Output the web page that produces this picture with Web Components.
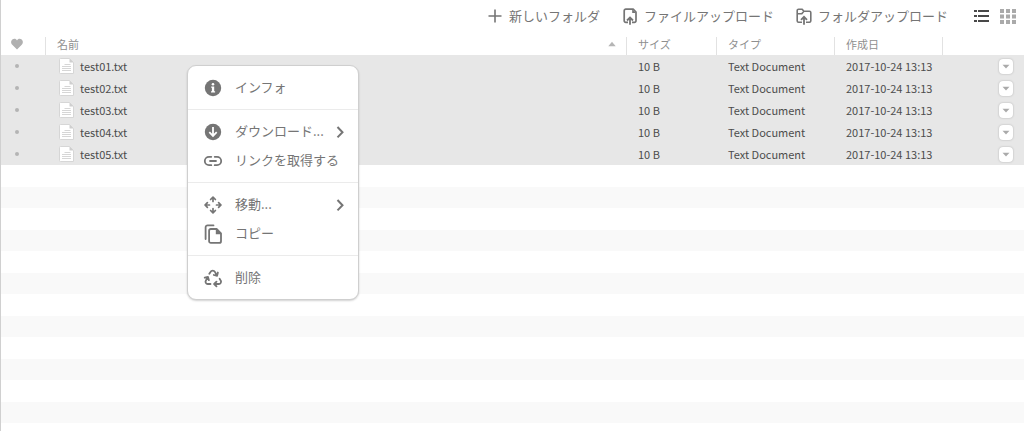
<!DOCTYPE html>
<html lang="ja">
<head>
<meta charset="utf-8">
<meta name="viewport" content="width=device-width, initial-scale=1">
<title>ファイル</title>
<style>
  body {
    margin: 0;
    background: #fff;
    color: #757575;
    font: 13px/22px "Noto Sans CJK JP", "Noto Sans", sans-serif;
  }
</style>
</head>
<body>
<file-browser>
  <tool-bar slot="toolbar">
    <tool-action icon="plus">新しいフォルダ</tool-action>
    <tool-action icon="file-up">ファイルアップロード</tool-action>
    <tool-action icon="folder-up">フォルダアップロード</tool-action>
    <view-switch slot="end"></view-switch>
  </tool-bar>
  <file-table></file-table>
  <context-menu slot="menu">
    <menu-group>
      <menu-item icon="info">インフォ</menu-item>
    </menu-group>
    <menu-group>
      <menu-item icon="download" submenu>ダウンロード...</menu-item>
      <menu-item icon="link">リンクを取得する</menu-item>
    </menu-group>
    <menu-group>
      <menu-item icon="move" submenu>移動...</menu-item>
      <menu-item icon="copy">コピー</menu-item>
    </menu-group>
    <menu-group>
      <menu-item icon="recycle">削除</menu-item>
    </menu-group>
  </context-menu>
</file-browser>

<script>
const line = 'fill="none" stroke="currentColor"';
const icons = {
  'plus': `<path ${line} stroke-width="1.6" d="M10 3.5v13M3.5 10h13"/>`,
  'file-up': `<path ${line} stroke-width="1.7" stroke-linejoin="round" d="M8 16.3H5.8a1.6 1.6 0 0 1-1.6-1.6V4.8a1.6 1.6 0 0 1 1.6-1.6h7.4L16 6v8.7a1.6 1.6 0 0 1-1.6 1.6H12"/><path fill="currentColor" d="M12.200 3v4H16z"/><path ${line} stroke-width="1.8" d="M10 18.8v-6.500M7 14.500l3-3 3 3"/>`,
  'folder-up': `<path ${line} stroke-width="1.6" stroke-linejoin="round" d="M8 16.2H4.500A1.300 1.300 0 0 1 3.200 15V4.600a1.300 1.300 0 0 1 1.300-1.300h3.700l1.600 2h5.700a1.300 1.300 0 0 1 1.300 1.300V15a1.300 1.300 0 0 1-1.300 1.200H12M3.400 7.800h4.400l2-2.500"/><path ${line} stroke-width="1.8" d="M10 18.800v-7.500M7 13.800l3-3 3 3"/>`,
  'info': `<circle cx="10" cy="10" r="8.2" fill="currentColor"/><circle cx="10" cy="6.3" r="1.3" fill="#fff"/><path fill="#fff" d="M8.200 8.500h3v4.700h.9v1.200H8v-1.200h.9V9.700h-.7z"/>`,
  'download': `<circle cx="10" cy="10" r="8.2" fill="currentColor"/><path fill="none" stroke="#fff" stroke-width="1.8" d="M10 5v8.700M6.300 10.200l3.700 3.700 3.700-3.700"/>`,
  'link': `<path ${line} stroke-width="1.8" stroke-linecap="round" d="M8.300 5.800H6a4.200 4.200 0 0 0 0 8.400h2.300M11.700 5.800H14a4.200 4.200 0 0 1 0 8.400h-2.300M7 10h6"/>`,
  'move': `<path ${line} stroke-width="1.7" stroke-linecap="round" stroke-linejoin="round" d="M10 6.500V2.300M7.600 4.500 10 2.100l2.400 2.400M10 13.500v4.200M7.600 15.500l2.400 2.400 2.400-2.400M6.500 10H2.200M4.400 7.600 2 10l2.400 2.400M13.500 10h4.300M15.600 7.600 18 10l-2.400 2.400"/>`,
  'copy': `<path ${line} stroke-width="1.8" stroke-linecap="round" stroke-linejoin="round" d="M2.600 15V3.400A2 2 0 0 1 4.600 1.400H10.500M7.800 5h5.800L18 9.400v7.800a1.700 1.700 0 0 1-1.700 1.700H7.800a1.700 1.700 0 0 1-1.700-1.700V6.700A1.700 1.700 0 0 1 7.800 5z"/><path fill="currentColor" d="M12.800 5v5.200H18V9z"/>`,
  'recycle': `<g ${line} stroke-width="1.8" stroke-linejoin="round" stroke-linecap="round"><path d="M6.300 5.800 7.500 3.900a2.500 2.500 0 0 1 4.400 0l2 3.600M14.900 4.500l-.8 3.300-3.300-.8"/><path d="M16.600 10.800l1.100 1.800a2.200 2.200 0 0 1-1.900 3.400h-4.300M13.500 13.600l-2.400 2.400 2.400 2.300"/><path d="M7.500 16H4.700a2.200 2.200 0 0 1-1.900-3.300l2-3.600M1.700 9.700l3.300-.8.900 3.300"/></g>`,
  'list': `<path fill="currentColor" d="M2 4h3v2H2zM6 4h11v2H6zM2 9h3v2H2zM6 9h11v2H6zM2 14h3v2H2zM6 14h11v2H6z"/>`,
  'grid': `<path fill="currentColor" d="M2 3h4v4H2zM8 3h4v4H8zM14 3h4v4h-4zM2 8.500h4v4H2zM8 8.500h4v4H8zM14 8.500h4v4h-4zM2 14h4v4H2zM8 14h4v4H8zM14 14h4v4h-4z"/>`,
  'heart': `<path fill="currentColor" d="M10 15.500 5.500 11C2.500 8 5 4.700 7.300 4.700c1.300 0 2.200.7 2.700 1.700.5-1 1.400-1.700 2.700-1.700C15 4.700 17.500 8 14.500 11z"/>`,
  'sort': `<path fill="currentColor" d="M6.300 12.300h7.400L10 7.800z"/>`,
  'down': `<path fill="currentColor" d="M6.500 8.700h7L10 12.500z"/>`,
  'chevron': `<path ${line} stroke-width="2" d="M7.500 5l5 5.200-5 5.200"/>`,
  'text-file': `<path fill="#fff" stroke="#d6d6d6" d="M3.500 2.500h9l4 4v11h-13a1 1 0 0 1-1-1v-13a1 1 0 0 1 1-1z"/><path fill="#cfcfcf" d="M12.500 2.500v4h4z"/><path stroke="#d6d6d6" d="M7.500 8.500h6M5 10.500h9M5 12.500h9M5 14.500h9"/>`
};

const define = (name, css, html, setup) => {
  const template = document.createElement('template');
  template.innerHTML = `<style>*{box-sizing:border-box}${css}</style>${html}`;
  customElements.define(name, class extends HTMLElement {
    constructor() {
      super();
      this.attachShadow({ mode: 'open' }).append(template.content.cloneNode(true));
    }
    connectedCallback() {
      if (setup) setup(this, this.shadowRoot);
    }
  });
};

const resetButton = 'button{margin:0;padding:0;border:0;background:none;color:inherit;font:inherit;text-align:left;cursor:pointer}';

define('ui-icon',
  ':host{display:block;flex:none;width:20px;height:20px}svg{display:block}',
  '<svg viewBox="0 0 20 20" width="20" height="20" aria-hidden="true"></svg>',
  (host, root) => { root.querySelector('svg').innerHTML = icons[host.getAttribute('name')] || ''; });

define('file-browser',
  `:host{display:flex;flex-direction:column;position:relative;min-height:100vh;box-sizing:border-box;border-left:1px solid #d0d0d0}
   main{display:flex;flex-direction:column;flex:1}
   .menu{position:absolute;left:186px;top:65px}`,
  '<slot name="toolbar"></slot><main><slot></slot></main><div class="menu"><slot name="menu"></slot></div>');

define('tool-bar',
  `:host{display:block}
   nav{display:flex;justify-content:flex-end;align-items:center;gap:24px;height:33px;padding:0 6px 2px 0}
   .actions{display:flex;gap:20px}`,
  '<nav aria-label="ツール"><div class="actions"><slot></slot></div><slot name="end"></slot></nav>');

define('tool-action',
  `:host{display:block}${resetButton}
   button{display:flex;align-items:center;gap:4px;white-space:nowrap}`,
  '<button type="button"><ui-icon></ui-icon><span><slot></slot></span></button>',
  (host, root) => root.querySelector('ui-icon').shadowRoot.querySelector('svg').innerHTML = icons[host.getAttribute('icon')]);

define('view-switch',
  `:host{display:flex;gap:6px}${resetButton}
   button{color:#aaa}button[aria-pressed=true]{color:#484848}`,
  `<button type="button" aria-label="リスト表示" aria-pressed="true"><ui-icon name="list"></ui-icon></button>
   <button type="button" aria-label="グリッド表示" aria-pressed="false"><ui-icon name="grid"></ui-icon></button>`);

define('file-table',
  `:host{display:flex;flex-direction:column;flex:1}${resetButton}
   table{width:100%;table-layout:fixed;border-collapse:separate;border-spacing:0}
   .fav{width:45px}.size{width:90px}.type{width:118px}.date{width:108px}.more{width:81px}
   th,td{height:22px;padding:0 0 0 11px;text-align:left;white-space:nowrap}
   th{font-size:11px;line-height:14px;font-weight:400;color:#8f8f8f;padding:0}
   th>*{display:flex;align-items:center;height:18px;margin-top:4px;padding:0 0 4px 11px;border-right:1px solid #e2e2e2}
   th:last-child>*{border:0}
   th .heart{padding-left:6px;color:#b0b0b0}
   th button{width:100%;justify-content:space-between;padding:0 4px 4px 11px;border-right:1px solid #e2e2e2}
   th button ui-icon{color:#b5b5b5}
   td{background:#e7e7e7;color:#4c4c4c;font-size:11px;line-height:22px;font-weight:400}
   td:first-child{padding-left:14px}
   .name{display:flex;align-items:center;gap:3px;height:22px}
   td input{appearance:none;display:block;width:4px;height:4px;margin:0;border-radius:50%;background:#b4b4b4}
   td:last-child{padding:0 11px 0 0}
   td button{display:flex;align-items:center;justify-content:center;width:14px;height:15px;margin-left:auto;border-radius:4px;background:#fff;color:#aaa;box-shadow:0 0 2px #aaa;overflow:hidden}
   .stripes{flex:1;background:repeating-linear-gradient(#fff 0 22px,#f9f9f9 22px 43px)}`,
  `<table>
     <colgroup><col class="fav"><col><col class="size"><col class="type"><col class="date"><col class="more"></colgroup>
     <thead><tr>
       <th scope="col" aria-label="お気に入り"><div class="heart"><ui-icon name="heart"></ui-icon></div></th>
       <th scope="col" aria-sort="ascending"><button type="button">名前<ui-icon name="sort"></ui-icon></button></th>
       <th scope="col"><div>サイズ</div></th>
       <th scope="col"><div>タイプ</div></th>
       <th scope="col"><div>作成日</div></th>
       <th scope="col" aria-label="操作"><div></div></th>
     </tr></thead>
     <tbody></tbody>
   </table>
   <div class="stripes"></div>`,
  (host, root) => {
    const files = ['test01.txt', 'test02.txt', 'test03.txt', 'test04.txt', 'test05.txt'];
    root.querySelector('tbody').innerHTML = files.map(name => `<tr>
      <td><input type="checkbox" aria-label="${name} をお気に入りに追加"></td>
      <td><div class="name"><ui-icon name="text-file"></ui-icon><span>${name}</span></div></td>
      <td>10 B</td><td>Text Document</td><td>2017-10-24 13:13</td>
      <td><button type="button" aria-label="${name} のメニュー"><ui-icon name="down"></ui-icon></button></td>
    </tr>`).join('');
  });

define('context-menu',
  `:host{display:block;box-sizing:border-box;min-width:172px;border:1px solid #cfcfcf;border-radius:9px;background:#fff;box-shadow:0 1px 2px rgba(0,0,0,.18)}`,
  '<div role="menu"><slot></slot></div>');

define('menu-group',
  `:host{display:block;padding:7px 0}
   :host(:not(:first-child)){border-top:1px solid #ebebeb}`,
  '<div role="group"><slot></slot></div>');

define('menu-item',
  `:host{display:block}${resetButton}
   button{display:flex;align-items:center;width:100%;height:29px;padding:0 8px 0 15px;white-space:nowrap}
   .label{flex:1;padding-left:12px;line-height:22px;padding-bottom:2px}`,
  '<button type="button" role="menuitem"><ui-icon></ui-icon><span class="label"><slot></slot></span></button>',
  (host, root) => {
    root.querySelector('ui-icon').shadowRoot.querySelector('svg').innerHTML = icons[host.getAttribute('icon')];
    if (host.hasAttribute('submenu') && !root.querySelector('[name=chevron]')) {
      const arrow = document.createElement('ui-icon');
      arrow.setAttribute('name', 'chevron');
      root.querySelector('button').append(arrow);
      root.querySelector('button').setAttribute('aria-haspopup', 'menu');
    }
  });
</script>
</body>
</html>
